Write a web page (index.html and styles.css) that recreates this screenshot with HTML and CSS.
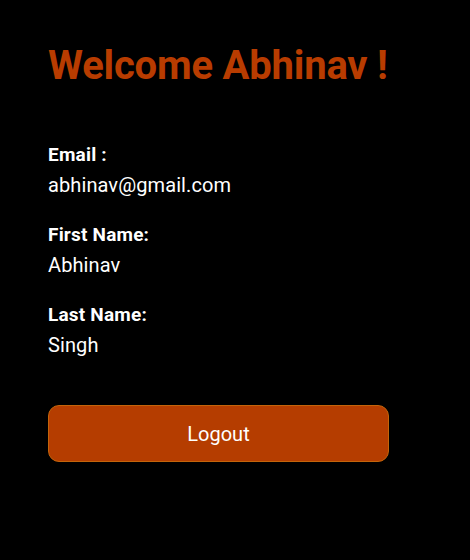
FILE: index.html
```html
<!DOCTYPE html>
<html>
<head>
<meta charset="utf-8">
<link rel="stylesheet" href="styles.css">
</head>
<body>
<main class="profile">
  <h1 class="title">Welcome Abhinav !</h1>
  <div class="fields">
    <div class="field">
      <div class="label">Email :</div>
      <div class="value">abhinav@gmail.com</div>
    </div>
    <div class="field">
      <div class="label">First Name:</div>
      <div class="value">Abhinav</div>
    </div>
    <div class="field">
      <div class="label">Last Name:</div>
      <div class="value">Singh</div>
    </div>
  </div>
  <button class="logout">Logout</button>
</main>
</body>
</html>
```
FILE: styles.css
```css
html, body {
  margin: 0;
  padding: 0;
  background: #000;
  height: 100%;
}
body {
  font-family: Roboto, "Open Sans", sans-serif;
  color: #fff;
}
.profile {
  width: 341px;
  padding: 42px 0 0 48px;
}
.title {
  margin: 0;
  font-size: 40px;
  font-weight: 700;
  color: #b83c00;
  line-height: 48px;
  white-space: nowrap;
  letter-spacing: -0.2px;
}
.fields {
  margin-top: 50px;
  display: flex;
  flex-direction: column;
  gap: 20px;
}
.field {
  display: flex;
  flex-direction: column;
}
.label {
  font-size: 19px;
  font-weight: 700;
  line-height: 30px;
  letter-spacing: 0.2px;
}
.value {
  font-size: 20px;
  line-height: 30px;
  letter-spacing: 0.1px;
}
.logout {
  display: block;
  margin-top: 45px;
  width: 341px;
  height: 57px;
  background: #b53d00;
  border: 1px solid #c4640a;
  border-radius: 11px;
  color: #fff;
  font-family: inherit;
  font-size: 20px;
  cursor: pointer;
}
```
